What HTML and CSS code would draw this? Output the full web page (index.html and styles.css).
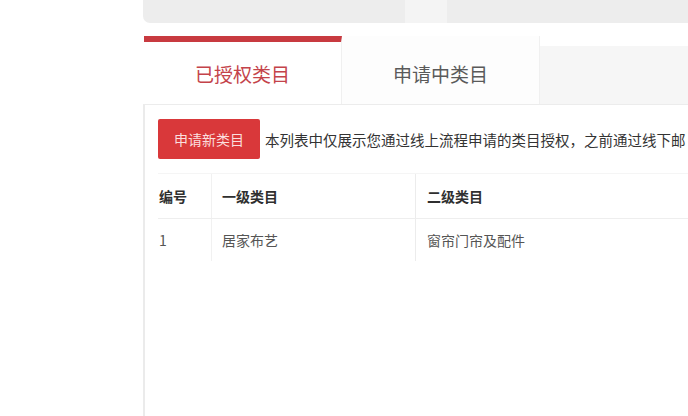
FILE: index.html
```html
<!DOCTYPE html>
<html lang="zh-CN">
<head>
<meta charset="utf-8">
<link rel="stylesheet" href="styles.css">
</head>
<body>
<div class="main">
  <div class="topbar"><span class="topbar-glare"></span></div>
  <div class="tabs">
    <div class="tab active">已授权类目</div>
    <div class="tab">申请中类目</div>
    <div class="tab-rest"></div>
  </div>
  <div class="panel">
    <div class="toolbar">
      <button class="btn">申请新类目</button>
      <span class="notice">本列表中仅展示您通过线上流程申请的类目授权，之前通过线下邮</span>
    </div>
    <table class="grid">
      <thead>
        <tr><th class="c1">编号</th><th class="c2">一级类目</th><th class="c3">二级类目</th></tr>
      </thead>
      <tbody>
        <tr><td class="c1">1</td><td class="c2">居家布艺</td><td class="c3">窗帘门帘及配件</td></tr>
      </tbody>
    </table>
  </div>
</div>
</body>
</html>
```
FILE: styles.css
```css
html, body {
  margin: 0;
  padding: 0;
  background: #ffffff;
  height: 100%;
  overflow: hidden;
}
body {
  font-family: "Noto Sans CJK SC", "Noto Sans", "Liberation Sans", sans-serif;
  color: #333;
}
.main {
  margin-left: 143px;
  height: 416px;
  display: flex;
  flex-direction: column;
}
.topbar {
  height: 23px;
  background: #ededed;
  border-radius: 0 0 0 7px;
  position: relative;
  flex: none;
}
.topbar-glare {
  position: absolute;
  left: 262px;
  top: 0;
  width: 42px;
  height: 23px;
  background: #f4f4f4;
}
.tabs {
  margin-top: 13px;
  display: flex;
  height: 68px;
  border-bottom: 1px solid #ececec;
  flex: none;
}
.tab {
  width: 198px;
  box-sizing: border-box;
  display: flex;
  align-items: center;
  justify-content: center;
  font-size: 19px;
  color: #5a5a5a;
  background: #fdfdfd;
  padding-top: 6px;
  border-right: 1px solid #f0f0f0;
}
.tab.active {
  color: #c4434a;
  background: #ffffff;
  border-top: 6px solid #c83a40;
  padding-top: 0;
  margin-left: 1px;
}
.tab-rest {
  flex: 1;
  background: #f6f6f6;
  margin-top: 10px;
}
.panel {
  flex: 1;
  border-left: 2px solid #ebebeb;
  padding: 14px 0 0 13px;
  overflow: hidden;
}
.toolbar {
  display: flex;
  align-items: center;
  gap: 5px;
  white-space: nowrap;
}
.btn {
  width: 102px;
  height: 40px;
  border: none;
  border-radius: 2px;
  background: #d9383a;
  color: #fbdede;
  font-family: inherit;
  font-size: 14px;
  padding: 0;
  flex: none;
}
.notice {
  font-size: 14.5px;
  color: #333;
}
.grid {
  margin-top: 14px;
  border-collapse: collapse;
  width: 600px;
  font-size: 14px;
}
.grid th {
  height: 44px;
  text-align: left;
  font-weight: bold;
  color: #2f2f2f;
  border-bottom: 1px solid #eeeeee;
  border-top: 1px solid #f5f5f5;
}
.grid td {
  height: 42px;
  color: #555;
  text-align: left;
}
.c1 {
  width: 52px;
  padding: 0 0 0 1px;
}
.c2 {
  width: 193px;
  padding: 0 0 0 10px;
  border-left: 1px solid #f1f1f1;
}
.c3 {
  padding: 0 0 0 11px;
  border-left: 1px solid #ececec;
}
```
